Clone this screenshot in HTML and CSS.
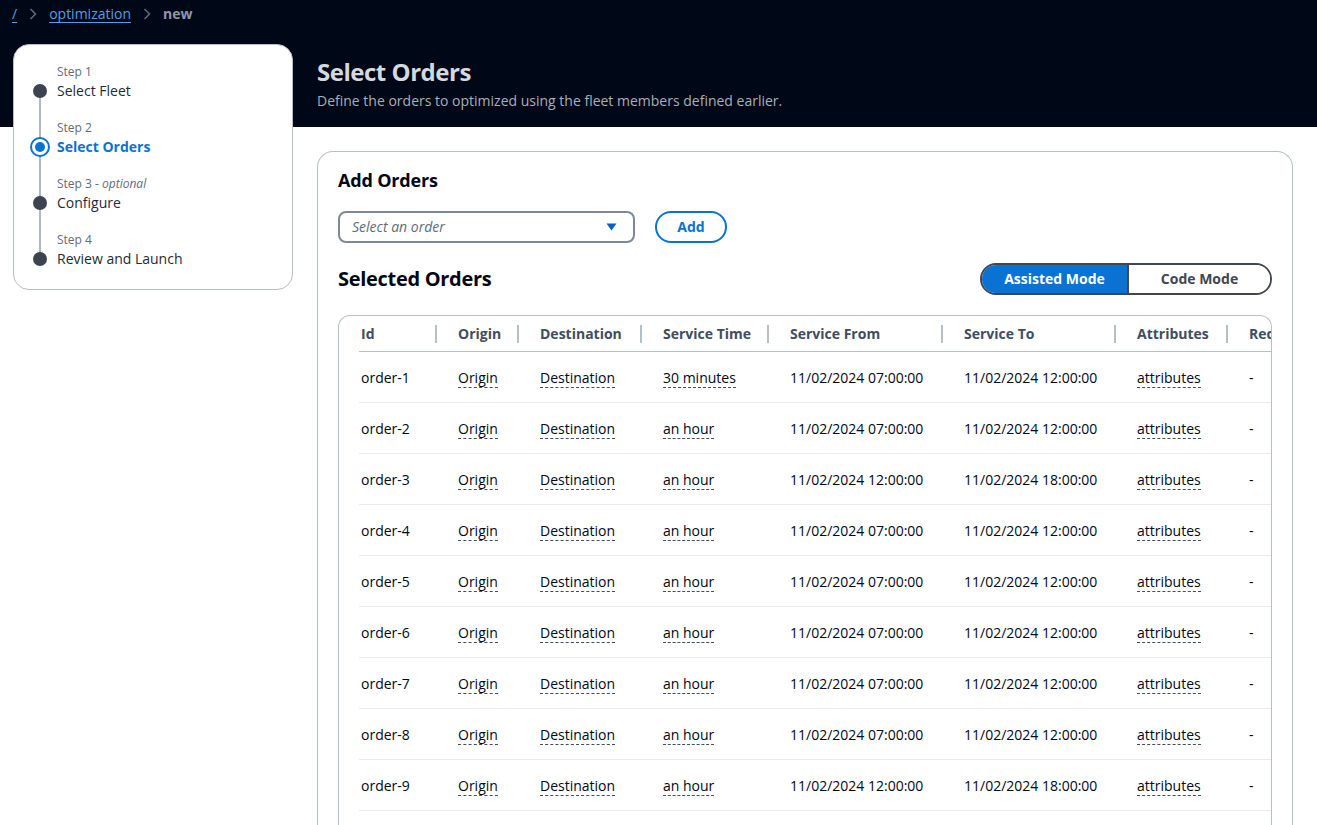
FILE: index.html
```html
<!DOCTYPE html>
<html lang="en">
<head>
<meta charset="utf-8">
<title>Select Orders</title>
<link rel="stylesheet" href="styles.css">
</head>
<body>
<div class="page">
  <nav class="breadcrumbs">
    <a class="crumb-link" href="#">/</a>
    <svg class="chev" width="8" height="12" viewBox="0 0 8 12"><path d="M1.5 1 L6.5 6 L1.5 11" fill="none" stroke="#5f6b7a" stroke-width="1.5"/></svg>
    <a class="crumb-link" href="#">optimization</a>
    <svg class="chev" width="8" height="12" viewBox="0 0 8 12"><path d="M1.5 1 L6.5 6 L1.5 11" fill="none" stroke="#5f6b7a" stroke-width="1.5"/></svg>
    <span class="crumb-current">new</span>
  </nav>

  <div class="layout">
    <aside class="wizard-nav">
      <div class="step first">
        <div class="rail-top"></div>
        <div class="step-label">Step 1</div>
        <div class="dot-cell"><span class="dot"></span></div>
        <div class="step-title">Select Fleet</div>
        <div class="rail-bottom"></div>
        <div class="spacer"></div>
      </div>
      <div class="step">
        <div class="rail-top"></div>
        <div class="step-label">Step 2</div>
        <div class="dot-cell"><span class="ring"><span class="ring-dot"></span></span></div>
        <div class="step-title active">Select Orders</div>
        <div class="rail-bottom"></div>
        <div class="spacer"></div>
      </div>
      <div class="step">
        <div class="rail-top"></div>
        <div class="step-label">Step 3 - <em>optional</em></div>
        <div class="dot-cell"><span class="dot"></span></div>
        <div class="step-title">Configure</div>
        <div class="rail-bottom"></div>
        <div class="spacer"></div>
      </div>
      <div class="step last">
        <div class="rail-top"></div>
        <div class="step-label">Step 4</div>
        <div class="dot-cell"><span class="dot"></span></div>
        <div class="step-title">Review and Launch</div>
      </div>
    </aside>

    <main class="main">
      <header class="page-header">
        <h1 class="page-title">Select Orders</h1>
        <p class="page-desc">Define the orders to optimized using the fleet members defined earlier.</p>
      </header>

      <section class="container">
        <h2 class="h-add">Add Orders</h2>
        <div class="add-row">
          <div class="select">
            <span class="placeholder">Select an order</span>
            <svg class="caret" width="11" height="8" viewBox="0 0 11 8"><path d="M0.5 0.5 H10.5 L5.5 7.5 Z" fill="#0b5fc8"/></svg>
          </div>
          <button class="btn-add">Add</button>
        </div>

        <div class="sel-row">
          <h2 class="h-sel">Selected Orders</h2>
          <div class="segmented">
            <button class="seg seg-on">Assisted Mode</button>
            <button class="seg seg-off">Code Mode</button>
          </div>
        </div>

        <div class="table-wrap">
          <table class="orders">
            <colgroup>
              <col class="c-id"><col class="c-origin"><col class="c-dest"><col class="c-time"><col class="c-from"><col class="c-to"><col class="c-attr"><col class="c-req">
            </colgroup>
            <thead>
              <tr>
                <th>Id</th><th>Origin</th><th>Destination</th><th>Service Time</th><th>Service From</th><th>Service To</th><th>Attributes</th><th class="no-div">Requirements</th>
              </tr>
            </thead>
            <tbody>
              <tr><td>order-1</td><td><span class="pop">Origin</span></td><td><span class="pop">Destination</span></td><td><span class="pop">30 minutes</span></td><td>11/02/2024 07:00:00</td><td>11/02/2024 12:00:00</td><td><span class="pop">attributes</span></td><td>-</td></tr>
              <tr><td>order-2</td><td><span class="pop">Origin</span></td><td><span class="pop">Destination</span></td><td><span class="pop">an hour</span></td><td>11/02/2024 07:00:00</td><td>11/02/2024 12:00:00</td><td><span class="pop">attributes</span></td><td>-</td></tr>
              <tr><td>order-3</td><td><span class="pop">Origin</span></td><td><span class="pop">Destination</span></td><td><span class="pop">an hour</span></td><td>11/02/2024 12:00:00</td><td>11/02/2024 18:00:00</td><td><span class="pop">attributes</span></td><td>-</td></tr>
              <tr><td>order-4</td><td><span class="pop">Origin</span></td><td><span class="pop">Destination</span></td><td><span class="pop">an hour</span></td><td>11/02/2024 07:00:00</td><td>11/02/2024 12:00:00</td><td><span class="pop">attributes</span></td><td>-</td></tr>
              <tr><td>order-5</td><td><span class="pop">Origin</span></td><td><span class="pop">Destination</span></td><td><span class="pop">an hour</span></td><td>11/02/2024 07:00:00</td><td>11/02/2024 12:00:00</td><td><span class="pop">attributes</span></td><td>-</td></tr>
              <tr><td>order-6</td><td><span class="pop">Origin</span></td><td><span class="pop">Destination</span></td><td><span class="pop">an hour</span></td><td>11/02/2024 07:00:00</td><td>11/02/2024 12:00:00</td><td><span class="pop">attributes</span></td><td>-</td></tr>
              <tr><td>order-7</td><td><span class="pop">Origin</span></td><td><span class="pop">Destination</span></td><td><span class="pop">an hour</span></td><td>11/02/2024 07:00:00</td><td>11/02/2024 12:00:00</td><td><span class="pop">attributes</span></td><td>-</td></tr>
              <tr><td>order-8</td><td><span class="pop">Origin</span></td><td><span class="pop">Destination</span></td><td><span class="pop">an hour</span></td><td>11/02/2024 07:00:00</td><td>11/02/2024 12:00:00</td><td><span class="pop">attributes</span></td><td>-</td></tr>
              <tr><td>order-9</td><td><span class="pop">Origin</span></td><td><span class="pop">Destination</span></td><td><span class="pop">an hour</span></td><td>11/02/2024 12:00:00</td><td>11/02/2024 18:00:00</td><td><span class="pop">attributes</span></td><td>-</td></tr>
            </tbody>
          </table>
        </div>
      </section>
    </main>
  </div>
</div>
</body>
</html>
```
FILE: styles.css
```css
* { box-sizing: border-box; }
html, body { margin: 0; padding: 0; }
body {
  font-family: "Open Sans", "Noto Sans", sans-serif;
  font-size: 14px;
  line-height: 22px;
  color: #000716;
  background: #ffffff;
}
.page {
  background: linear-gradient(#000716 0, #000716 127px, #ffffff 127px);
  min-height: 825px;
}

/* breadcrumbs */
.breadcrumbs {
  display: flex;
  align-items: center;
  gap: 12px;
  height: 28px;
  padding-left: 12px;
}
.crumb-link {
  color: #539fe5;
  text-decoration: underline;
  text-underline-offset: 3px;
}
.chev { display: block; }
.crumb-current {
  color: #8d99a8;
  font-weight: 700;
}

/* layout */
.layout {
  display: grid;
  grid-template-columns: 280px 976px;
  column-gap: 24px;
  padding-left: 13px;
  margin-top: 16px;
  align-items: start;
}

/* wizard nav */
.wizard-nav {
  background: #ffffff;
  border: 1px solid #b6bec9;
  border-radius: 16px;
  padding: 19px 16px 19px 16px;
}
.step {
  display: grid;
  grid-template-columns: 20px 1fr;
  grid-template-rows: 16px 22px 18px;
  column-gap: 7px;
}
.step.last { grid-template-rows: 16px 22px; }
.rail-top, .rail-bottom {
  grid-column: 1;
  justify-self: center;
  width: 2px;
  background: #b0b8c3;
}
.rail-top { grid-row: 1; }
.rail-bottom { grid-row: 3; }
.step.first .rail-top { background: transparent; }
.spacer { grid-column: 2; grid-row: 3; }
.step-label {
  grid-column: 2;
  grid-row: 1;
  font-size: 12px;
  line-height: 16px;
  color: #5f6b7a;
}
.step-label em { font-style: italic; }
.dot-cell {
  grid-column: 1;
  grid-row: 2;
  display: flex;
  align-items: center;
  justify-content: center;
  position: relative;
}
.dot-cell::before {
  content: "";
  position: absolute;
  left: 9px;
  top: 0;
  bottom: 0;
  width: 2px;
  background: #b0b8c3;
}
.step.first .dot-cell::before { top: 50%; }
.step.last .dot-cell::before { bottom: 50%; }
.dot {
  position: relative;
  width: 14px;
  height: 14px;
  border-radius: 50%;
  background: #3d4450;
}
.ring {
  position: relative;
  width: 20px;
  height: 20px;
  border-radius: 50%;
  border: 2px solid #0972d3;
  background: #ffffff;
  display: flex;
  align-items: center;
  justify-content: center;
}
.ring-dot {
  width: 10px;
  height: 10px;
  border-radius: 50%;
  background: #0972d3;
}
.step-title {
  grid-column: 2;
  grid-row: 2;
  color: #232b37;
}
.step-title.active {
  color: #0972d3;
  font-weight: 700;
}

/* main */
.main { min-width: 0; }
.page-header { padding-top: 13px; }
.page-title {
  margin: 0;
  font-size: 24px;
  line-height: 30px;
  font-weight: 700;
  letter-spacing: -0.02em;
  color: #d5d9de;
}
.page-desc {
  margin: 3px 0 0 0;
  color: #a8b0ba;
}

.container {
  margin-top: 39px;
  background: #ffffff;
  border: 1px solid #b6bec9;
  border-bottom: none;
  border-radius: 16px 16px 0 0;
  padding: 17px 20px 0 20px;
  min-height: 700px;
}
.h-add {
  margin: 0;
  font-size: 18px;
  line-height: 22px;
  font-weight: 700;
  letter-spacing: -0.01em;
}
.add-row {
  display: flex;
  align-items: center;
  gap: 20px;
  margin-top: 20px;
}
.select {
  width: 297px;
  height: 32px;
  border: 2px solid #7d8998;
  border-radius: 8px;
  display: flex;
  align-items: center;
  justify-content: space-between;
  padding: 0 16px 0 12px;
}
.placeholder {
  font-style: italic;
  color: #5f6b7a;
}
.caret { display: block; }
.btn-add {
  font: inherit;
  font-weight: 700;
  color: #0972d3;
  background: #ffffff;
  border: 2px solid #0972d3;
  border-radius: 20px;
  height: 32px;
  width: 72px;
  padding: 0;
}

.sel-row {
  display: flex;
  align-items: center;
  justify-content: space-between;
  margin-top: 20px;
}
.h-sel {
  margin: 0;
  font-size: 20px;
  line-height: 24px;
  font-weight: 700;
  letter-spacing: -0.015em;
}
.segmented {
  display: flex;
  border: 2px solid #424650;
  border-radius: 16px;
  overflow: hidden;
  height: 32px;
}
.seg {
  font: inherit;
  font-weight: 700;
  border: none;
  padding: 0;
  height: 28px;
}
.seg-on {
  width: 145px;
  background: #0972d3;
  color: #ffffff;
}
.seg-off {
  width: 143px;
  background: #ffffff;
  color: #424650;
  border-left: 2px solid #424650;
}

.table-wrap {
  margin-top: 20px;
  border: 1px solid #b6bec9;
  border-bottom: none;
  border-radius: 12px 12px 0 0;
  overflow: hidden;
  padding-left: 20px;
  min-height: 600px;
}
.orders {
  table-layout: fixed;
  width: 1019px;
  border-collapse: collapse;
}
.c-id { width: 78px; }
.c-origin { width: 82px; }
.c-dest { width: 123px; }
.c-time { width: 127px; }
.c-from { width: 174px; }
.c-to { width: 173px; }
.c-attr { width: 112px; }
.c-req { width: 150px; }
.orders th {
  text-align: left;
  font-weight: 700;
  color: #414d5c;
  padding: 7px 20px 6px 21px;
  border-bottom: 1px solid #b6bec9;
  white-space: nowrap;
  overflow: hidden;
  background: linear-gradient(#b6bec9, #b6bec9) right center / 2px 18px no-repeat;
}
.orders th.no-div { background: none; }
.orders td {
  padding: 15px 20px 13px 21px;
  border-bottom: 1px solid #e9ebed;
  white-space: nowrap;
}
.orders th:first-child, .orders td:first-child { padding-left: 2px; }
.pop {
  border-bottom: 1px dashed #414d5c;
}
```
